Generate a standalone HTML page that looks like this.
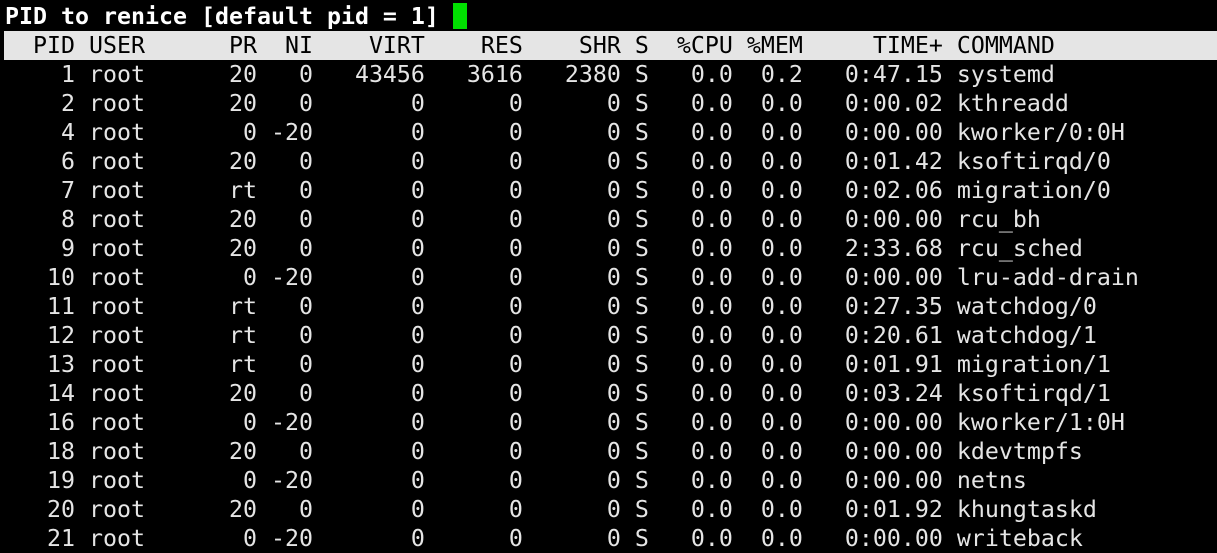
<!DOCTYPE html>
<html><head><meta charset="utf-8"><style>
html,body{margin:0;padding:0;background:#000;width:1217px;height:553px;overflow:hidden}
pre{margin:0;position:absolute;left:5px;top:2px;font-family:"DejaVu Sans Mono","Liberation Mono",monospace;font-size:23.25px;line-height:29px;color:#e5e5e5}
.l{display:block;height:29px;white-space:pre}
.h{background:#e5e5e5;color:#000;margin-left:-1px;padding-left:1px;width:1300px}
b{font-weight:bold;color:#fff}
.cur{display:inline-block;width:14px;height:26px;background:#00e000;vertical-align:top;margin-top:1px}
</style></head><body>
<pre><span class="l"><b>PID to renice [default pid = 1] </b><span class="cur"></span></span><span class="l h">  PID USER      PR  NI    VIRT    RES    SHR S  %CPU %MEM     TIME+ COMMAND</span><span class="l">    1 root      20   0   43456   3616   2380 S   0.0  0.2   0:47.15 systemd</span><span class="l">    2 root      20   0       0      0      0 S   0.0  0.0   0:00.02 kthreadd</span><span class="l">    4 root       0 -20       0      0      0 S   0.0  0.0   0:00.00 kworker/0:0H</span><span class="l">    6 root      20   0       0      0      0 S   0.0  0.0   0:01.42 ksoftirqd/0</span><span class="l">    7 root      rt   0       0      0      0 S   0.0  0.0   0:02.06 migration/0</span><span class="l">    8 root      20   0       0      0      0 S   0.0  0.0   0:00.00 rcu_bh</span><span class="l">    9 root      20   0       0      0      0 S   0.0  0.0   2:33.68 rcu_sched</span><span class="l">   10 root       0 -20       0      0      0 S   0.0  0.0   0:00.00 lru-add-drain</span><span class="l">   11 root      rt   0       0      0      0 S   0.0  0.0   0:27.35 watchdog/0</span><span class="l">   12 root      rt   0       0      0      0 S   0.0  0.0   0:20.61 watchdog/1</span><span class="l">   13 root      rt   0       0      0      0 S   0.0  0.0   0:01.91 migration/1</span><span class="l">   14 root      20   0       0      0      0 S   0.0  0.0   0:03.24 ksoftirqd/1</span><span class="l">   16 root       0 -20       0      0      0 S   0.0  0.0   0:00.00 kworker/1:0H</span><span class="l">   18 root      20   0       0      0      0 S   0.0  0.0   0:00.00 kdevtmpfs</span><span class="l">   19 root       0 -20       0      0      0 S   0.0  0.0   0:00.00 netns</span><span class="l">   20 root      20   0       0      0      0 S   0.0  0.0   0:01.92 khungtaskd</span><span class="l">   21 root       0 -20       0      0      0 S   0.0  0.0   0:00.00 writeback</span></pre>
</body></html>
